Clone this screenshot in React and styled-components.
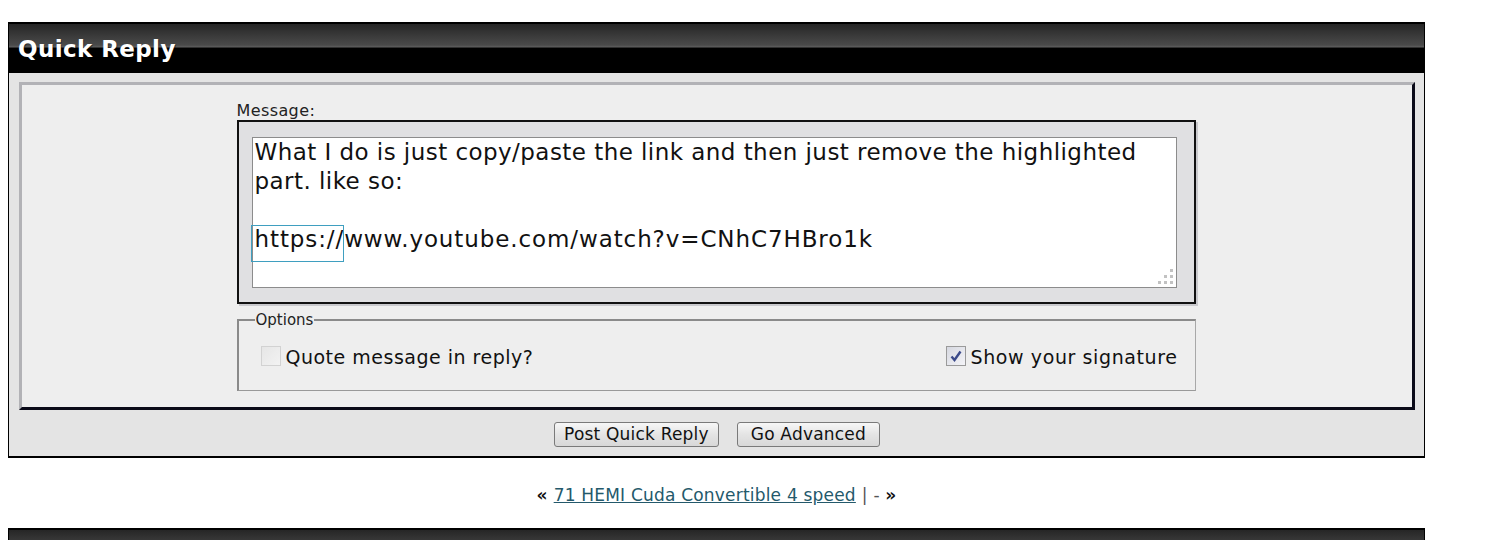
import React from 'react';
import styled, { createGlobalStyle } from 'styled-components';

const GlobalStyle = createGlobalStyle`
  html, body {
    margin: 0;
    padding: 0;
    background: #fff;
  }
  body {
    font-family: "DejaVu Sans", Verdana, sans-serif;
    color: #111;
  }
`;

const Page = styled.div`
  padding: 22px 0 0 8px;
`;

// glossy black bar used for the block header and the next block below
const Bar = styled.div`
  height: 48px;
  border: 1px solid #000;
  border-top-width: 2px;
  background: linear-gradient(
    to bottom,
    #262626 0%,
    #4a4a4a 44%,
    #5e5e5e 48%,
    #000 50%,
    #000 100%
  );
  display: flex;
  align-items: center;
  padding-left: 9px;
`;

const Block = styled.div`
  width: 1417px;
`;

const Title = styled.h2`
  margin: 0;
  padding-top: 2px;
  font-family: "DejaVu Sans", Verdana, sans-serif;
  font-weight: bold;
  font-size: 23px;
  letter-spacing: 0.4px;
  color: #fff;
  text-shadow: 1px 1px 0 rgba(0, 0, 0, 0.4);
`;

const Body = styled.div`
  background: #e4e4e4;
  border: 1px solid #000;
  border-top: none;
  border-bottom-width: 2px;
  padding: 9px 9px 9px 10px;
`;

const Panel = styled.div`
  background: #eeeeee;
  border-style: solid;
  border-width: 3px;
  border-color: #b2b2b6 #0a0a18 #0a0a18 #b2b2b6;
  padding: 16px 0 16px;
  display: flex;
  justify-content: center;
`;

const Column = styled.div`
  width: 959px;
  margin-left: -2px;
`;

const Label = styled.div`
  font-size: 16px;
  letter-spacing: 0.4px;
  line-height: 19px;
  color: #222;
`;

const EditorFrame = styled.div`
  background: #e0e0e2;
  border: 2px solid #111;
  box-shadow: 2px 2px 0 #c9c9cd;
  padding: 15px 0 14px 13px;
`;

const Editor = styled.div`
  position: relative;
  width: 921px;
  height: 149px;
  background: #fff;
  border: 1px solid #8c8c8c;
  padding: 0 0 0 2px;
  font-size: 23px;
  letter-spacing: 0.45px;
  line-height: 29px;
  white-space: nowrap;
  color: #111;
`;

const Line = styled.div`
  min-height: 29px;
  letter-spacing: ${(p) => p.$ls || 0.45}px;
`;

const Marked = styled.span`
  position: relative;
  display: inline-block;

  &::after {
    content: '';
    position: absolute;
    top: 0;
    left: -4px;
    right: 0;
    bottom: -8px;
    border: 1px solid #3f9fc0;
  }
`;

const Grip = styled.svg`
  position: absolute;
  right: 2px;
  bottom: 2px;
`;

const Options = styled.fieldset`
  margin: 7px 0 0;
  padding: 17px 17px 22px 22px;
  border-style: solid;
  border-width: 2px 1px 1px 2px;
  border-color: #8a8a8a #a8a8a8 #999 #8a8a8a;
  display: flex;
  justify-content: space-between;
  align-items: center;
`;

const Legend = styled.legend`
  font-size: 15px;
  color: #222;
  padding: 0 1px;
  margin-left: -6px;
`;

const Check = styled.label`
  display: flex;
  align-items: center;
  gap: 5px;
  font-size: 19px;
  letter-spacing: ${(p) => p.$ls || 0.5}px;
  color: #111;
`;

const Box = styled.span`
  width: 18px;
  height: 18px;
  margin-top: -3px;
  border: 1px solid ${(p) => (p.$checked ? '#9a9a9a' : '#d2d2d2')};
  background: ${(p) =>
    p.$checked
      ? 'linear-gradient(135deg, #d6d8e0, #f4f4f8)'
      : 'linear-gradient(135deg, #e6e6e6, #f2f2f2)'};
  display: flex;
  align-items: center;
  justify-content: center;
`;

const Actions = styled.div`
  display: flex;
  justify-content: center;
  gap: 18px;
  margin-top: 12px;
`;

const Button = styled.button`
  height: 25px;
  padding: 0 ${(p) => p.$pad}px;
  font-family: "DejaVu Sans", Verdana, sans-serif;
  font-size: 17px;
  letter-spacing: 0.2px;
  line-height: 23px;
  color: #111;
  background: linear-gradient(to bottom, #f7f7f7, #e4e4e4 50%, #d8d8d8);
  border: 1px solid #7a7a7a;
  border-radius: 3px;
`;

const Nav = styled.div`
  width: 1417px;
  margin: 27px 0 23px;
  text-align: center;
  font-size: 17px;
  letter-spacing: 0.2px;
  line-height: 20px;
  color: #555;
`;

const Arrow = styled.strong`
  color: #111;
`;

const NavLink = styled.a`
  color: #24596b;
  text-decoration: underline;
  margin: 0 6px;
`;

const CheckMark = () => (
  <svg width="14" height="14" viewBox="0 0 14 14">
    <path d="M2.5 7.5 L5.5 11 L11.5 2.5" fill="none" stroke="#3b4a8a" strokeWidth="2.4" />
  </svg>
);

const GripIcon = () => (
  <Grip width="18" height="18" viewBox="0 0 18 18">
    {[
      [14, 2],
      [8, 8],
      [14, 8],
      [2, 14],
      [8, 14],
      [14, 14],
    ].map(([x, y]) => (
      <rect key={`${x}-${y}`} x={x} y={y} width="3" height="3" fill="#c2c2c2" />
    ))}
  </Grip>
);

export default function App() {
  return (
    <>
      <GlobalStyle />
      <Page>
        <Block>
          <Bar>
            <Title>Quick Reply</Title>
          </Bar>
          <Body>
            <Panel>
              <Column>
                <Label>Message:</Label>
                <EditorFrame>
                  <Editor>
                    <Line>What I do is just copy/paste the link and then just remove the highlighted</Line>
                    <Line>part. like so:</Line>
                    <Line />
                    <Line $ls={0.9}>
                      <Marked>https://</Marked>www.youtube.com/watch?v=CNhC7HBro1k
                    </Line>
                    <GripIcon />
                  </Editor>
                </EditorFrame>
                <Options>
                  <Legend>Options</Legend>
                  <Check>
                    <Box />
                    Quote message in reply?
                  </Check>
                  <Check $ls={0.6}>
                    <Box $checked>
                      <CheckMark />
                    </Box>
                    Show your signature
                  </Check>
                </Options>
              </Column>
            </Panel>
            <Actions>
              <Button $pad={9}>Post Quick Reply</Button>
              <Button $pad={13}>Go Advanced</Button>
            </Actions>
          </Body>
        </Block>
        <Nav>
          <Arrow>«</Arrow>
          <NavLink href="#">71 HEMI Cuda Convertible 4 speed</NavLink>| - <Arrow>»</Arrow>
        </Nav>
        <Block>
          <Bar />
        </Block>
      </Page>
    </>
  );
}
